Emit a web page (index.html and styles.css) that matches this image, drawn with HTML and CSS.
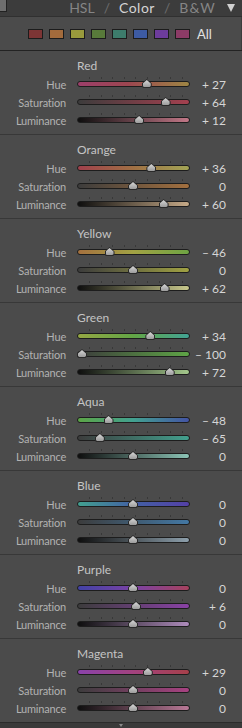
FILE: index.html
```html
<!DOCTYPE html>
<html lang="en">
<head>
    <meta charset="UTF-8">
    <meta name="viewport" content="width=device-width, initial-scale=1.0">
    <title>HSL / Color / B&amp;W</title>
    <link rel="stylesheet" href="styles.css">
</head>
<body>
    <div class="panel">
        <div class="header">
            <div class="corner"></div>
            <div class="tabs">
                <span class="tab">HSL</span>
                <span class="sep">/</span>
                <span class="tab active">Color</span>
                <span class="sep">/</span>
                <span class="tab bw">B&amp;W</span>
                <span class="collapse"></span>
            </div>
        </div>

        <div class="swatches">
            <span class="swatch red"></span>
            <span class="swatch orange"></span>
            <span class="swatch yellow"></span>
            <span class="swatch green"></span>
            <span class="swatch aqua"></span>
            <span class="swatch blue"></span>
            <span class="swatch purple"></span>
            <span class="swatch magenta"></span>
            <span class="all">All</span>
        </div>

        <!-- red -->
        <div class="group red">
            <div class="group-title">Red</div>
            <div class="row"><span class="label">Hue</span><div class="track hue"><div class="thumb" style="--p:.635"></div></div><span class="value">+ 27</span></div>
            <div class="row"><span class="label">Saturation</span><div class="track sat"><div class="thumb" style="--p:.82"></div></div><span class="value">+ 64</span></div>
            <div class="row"><span class="label">Luminance</span><div class="track lum"><div class="thumb" style="--p:.56"></div></div><span class="value">+ 12</span></div>
        </div>

        <!-- orange -->
        <div class="group orange">
            <div class="group-title">Orange</div>
            <div class="row"><span class="label">Hue</span><div class="track hue"><div class="thumb" style="--p:.68"></div></div><span class="value">+ 36</span></div>
            <div class="row"><span class="label">Saturation</span><div class="track sat"><div class="thumb" style="--p:.5"></div></div><span class="value">0</span></div>
            <div class="row"><span class="label">Luminance</span><div class="track lum"><div class="thumb" style="--p:.8"></div></div><span class="value">+ 60</span></div>
        </div>

        <!-- yellow -->
        <div class="group yellow">
            <div class="group-title">Yellow</div>
            <div class="row"><span class="label">Hue</span><div class="track hue"><div class="thumb" style="--p:.27"></div></div><span class="value">– 46</span></div>
            <div class="row"><span class="label">Saturation</span><div class="track sat"><div class="thumb" style="--p:.5"></div></div><span class="value">0</span></div>
            <div class="row"><span class="label">Luminance</span><div class="track lum"><div class="thumb" style="--p:.81"></div></div><span class="value">+ 62</span></div>
        </div>

        <!-- green -->
        <div class="group green">
            <div class="group-title">Green</div>
            <div class="row"><span class="label">Hue</span><div class="track hue"><div class="thumb" style="--p:.67"></div></div><span class="value">+ 34</span></div>
            <div class="row"><span class="label">Saturation</span><div class="track sat"><div class="thumb" style="--p:0"></div></div><span class="value">– 100</span></div>
            <div class="row"><span class="label">Luminance</span><div class="track lum"><div class="thumb" style="--p:.86"></div></div><span class="value">+ 72</span></div>
        </div>

        <!-- aqua -->
        <div class="group aqua">
            <div class="group-title">Aqua</div>
            <div class="row"><span class="label">Hue</span><div class="track hue"><div class="thumb" style="--p:.26"></div></div><span class="value">– 48</span></div>
            <div class="row"><span class="label">Saturation</span><div class="track sat"><div class="thumb" style="--p:.175"></div></div><span class="value">– 65</span></div>
            <div class="row"><span class="label">Luminance</span><div class="track lum"><div class="thumb" style="--p:.5"></div></div><span class="value">0</span></div>
        </div>

        <!-- blue -->
        <div class="group blue">
            <div class="group-title">Blue</div>
            <div class="row"><span class="label">Hue</span><div class="track hue"><div class="thumb" style="--p:.5"></div></div><span class="value">0</span></div>
            <div class="row"><span class="label">Saturation</span><div class="track sat"><div class="thumb" style="--p:.5"></div></div><span class="value">0</span></div>
            <div class="row"><span class="label">Luminance</span><div class="track lum"><div class="thumb" style="--p:.5"></div></div><span class="value">0</span></div>
        </div>

        <!-- purple -->
        <div class="group purple">
            <div class="group-title">Purple</div>
            <div class="row"><span class="label">Hue</span><div class="track hue"><div class="thumb" style="--p:.5"></div></div><span class="value">0</span></div>
            <div class="row"><span class="label">Saturation</span><div class="track sat"><div class="thumb" style="--p:.53"></div></div><span class="value">+ 6</span></div>
            <div class="row"><span class="label">Luminance</span><div class="track lum"><div class="thumb" style="--p:.5"></div></div><span class="value">0</span></div>
        </div>

        <!-- magenta -->
        <div class="group magenta">
            <div class="group-title">Magenta</div>
            <div class="row"><span class="label">Hue</span><div class="track hue"><div class="thumb" style="--p:.645"></div></div><span class="value">+ 29</span></div>
            <div class="row"><span class="label">Saturation</span><div class="track sat"><div class="thumb" style="--p:.5"></div></div><span class="value">0</span></div>
            <div class="row"><span class="label">Luminance</span><div class="track lum"><div class="thumb" style="--p:.5"></div></div><span class="value">0</span></div>
        </div>

        <div class="footer">
            <span class="footer-arrow"></span>
        </div>
    </div>
</body>
</html>
```

FILE: styles.css
```css
body {
    margin: 0;
    background: #3a3a3a;
    font-family: Lato, 'Open Sans', sans-serif;
}

.panel {
    width: 242px;
    background: #4b4b4b;
}

.header {
    height: 17px;
    display: flex;
    align-items: flex-start;
    justify-content: space-between;
    background: #3c3c3c;
    border-bottom: 1px solid #303030;
    box-sizing: border-box;
}

.corner {
    width: 6px;
    height: 11px;
    background: #6e6e6e;
    border-right: 1px solid #222;
    border-bottom: 1px solid #222;
}

.tabs {
    display: flex;
    align-items: flex-start;
    gap: 9px;
    padding-right: 7px;
    font-size: 14px;
    line-height: 16px;
    color: #858585;
}

.sep {
    color: #6c6c6c;
}

.tab.active {
    color: #d4d4d4;
    letter-spacing: 0.5px;
}

.tab.bw {
    letter-spacing: 1.2px;
    margin-right: -1px;
}

.collapse {
    width: 0;
    height: 0;
    margin: 4px 0 0 3px;
    border-left: 4.5px solid transparent;
    border-right: 4.5px solid transparent;
    border-top: 8px solid #d0d0d0;
}

.swatches {
    height: 33px;
    display: flex;
    align-items: center;
    gap: 6px;
    padding-left: 28px;
    box-sizing: border-box;
    border-right: 1px solid #3c3c3c;
}

.swatch {
    width: 15px;
    height: 10px;
    box-sizing: border-box;
    border: 1px solid #1c1c1c;
}

.swatch.red { background: #7d3535; }
.swatch.orange { background: #a36b3c; }
.swatch.yellow { background: #999a3c; }
.swatch.green { background: #587a3a; }
.swatch.aqua { background: #3d7c6c; }
.swatch.blue { background: #3d5ba3; }
.swatch.purple { background: #6d3c9c; }
.swatch.magenta { background: #8c3b66; }

.all {
    margin-left: 1px;
    font-size: 13px;
    color: #e2e2e2;
}

.group {
    height: 84px;
    box-sizing: border-box;
    border-top: 1px solid #383838;
    padding-top: 6px;
}

.group.red {
    border-top-color: #232323;
}

.group-title {
    height: 18px;
    line-height: 18px;
    padding-left: 77px;
    font-size: 12px;
    color: #c4c4c4;
}

.row {
    height: 18px;
    display: grid;
    grid-template-columns: 66px 124px 36px;
    align-items: center;
}

.label {
    text-align: right;
    font-size: 11px;
    letter-spacing: -0.2px;
    color: #b2b2b2;
}

.value {
    text-align: right;
    font-size: 12px;
    color: #d6d6d6;
}

.track {
    position: relative;
    height: 4px;
    margin-left: 11px;
    border: 1px solid #1d1d1d;
    border-radius: 3px;
}

/* tick marks */
.track::before {
    content: '';
    position: absolute;
    left: 11px;
    top: -5px;
    width: 94px;
    height: 2px;
    background: repeating-linear-gradient(to right, #383838 0 1px, transparent 1px 11.6px);
}

.thumb {
    position: absolute;
    top: -3px;
    left: calc(var(--p) * (100% - 9px) - 1px);
    width: 10px;
    height: 9px;
    background: #2a2a2a;
    clip-path: polygon(50% 0, 100% 50%, 100% 85%, 85% 100%, 15% 100%, 0 85%, 0 50%);
}

.thumb::after {
    content: '';
    position: absolute;
    inset: 1px;
    background: linear-gradient(#d6d6d6, #9c9c9c);
    clip-path: polygon(50% 0, 100% 50%, 100% 85%, 85% 100%, 15% 100%, 0 85%, 0 50%);
}

.red .hue { background: linear-gradient(to right, #9c3f6a, #9c4650 45%, #9e8644); }
.red .sat { background: linear-gradient(to right, #3c3c3c, #a4404f); }
.red .lum { background: linear-gradient(to right, #0e0e0e, #c27888); }

.orange .hue { background: linear-gradient(to right, #a0404c, #a07044 50%, #a2a455); }
.orange .sat { background: linear-gradient(to right, #3c3c3c, #a3703f); }
.orange .lum { background: linear-gradient(to right, #0e0e0e, #c6aa88); }

.yellow .hue { background: linear-gradient(to right, #a5713f, #a2a244 50%, #6ea443); }
.yellow .sat { background: linear-gradient(to right, #3c3c3c, #a1a243); }
.yellow .lum { background: linear-gradient(to right, #0e0e0e, #c8c88c); }

.green .hue { background: linear-gradient(to right, #95a743, #62a545 50%, #42a394); }
.green .sat { background: linear-gradient(to right, #3c3c3c, #5ea446); }
.green .lum { background: linear-gradient(to right, #0e0e0e, #a4c88c); }

.aqua .hue { background: linear-gradient(to right, #5ca546, #42a190 50%, #4454a5); }
.aqua .sat { background: linear-gradient(to right, #3c3c3c, #42a08e); }
.aqua .lum { background: linear-gradient(to right, #0e0e0e, #8cc4b6); }

.blue .hue { background: linear-gradient(to right, #42a090, #4260a4 50%, #5440a6); }
.blue .sat { background: linear-gradient(to right, #3c3c3c, #4378a4); }
.blue .lum { background: linear-gradient(to right, #0e0e0e, #8ea0ac); }

.purple .hue { background: linear-gradient(to right, #4242a6, #7a42a4 50%, #a6425e); }
.purple .sat { background: linear-gradient(to right, #3c3c3c, #8a42a6); }
.purple .lum { background: linear-gradient(to right, #0e0e0e, #ae8cbc); }

.magenta .hue { background: linear-gradient(to right, #8a42aa, #a2427e 50%, #a6404a); }
.magenta .sat { background: linear-gradient(to right, #3c3c3c, #a84282); }
.magenta .lum { background: linear-gradient(to right, #0e0e0e, #b87896); }

.footer {
    height: 6px;
    display: flex;
    justify-content: center;
    background: #3a3a3a;
    border-top: 1px solid #2c2c2c;
    box-sizing: border-box;
}

.footer-arrow {
    width: 0;
    height: 0;
    margin-top: 1px;
    border-left: 2.5px solid transparent;
    border-right: 2.5px solid transparent;
    border-top: 3px solid #8a8a8a;
}
```
